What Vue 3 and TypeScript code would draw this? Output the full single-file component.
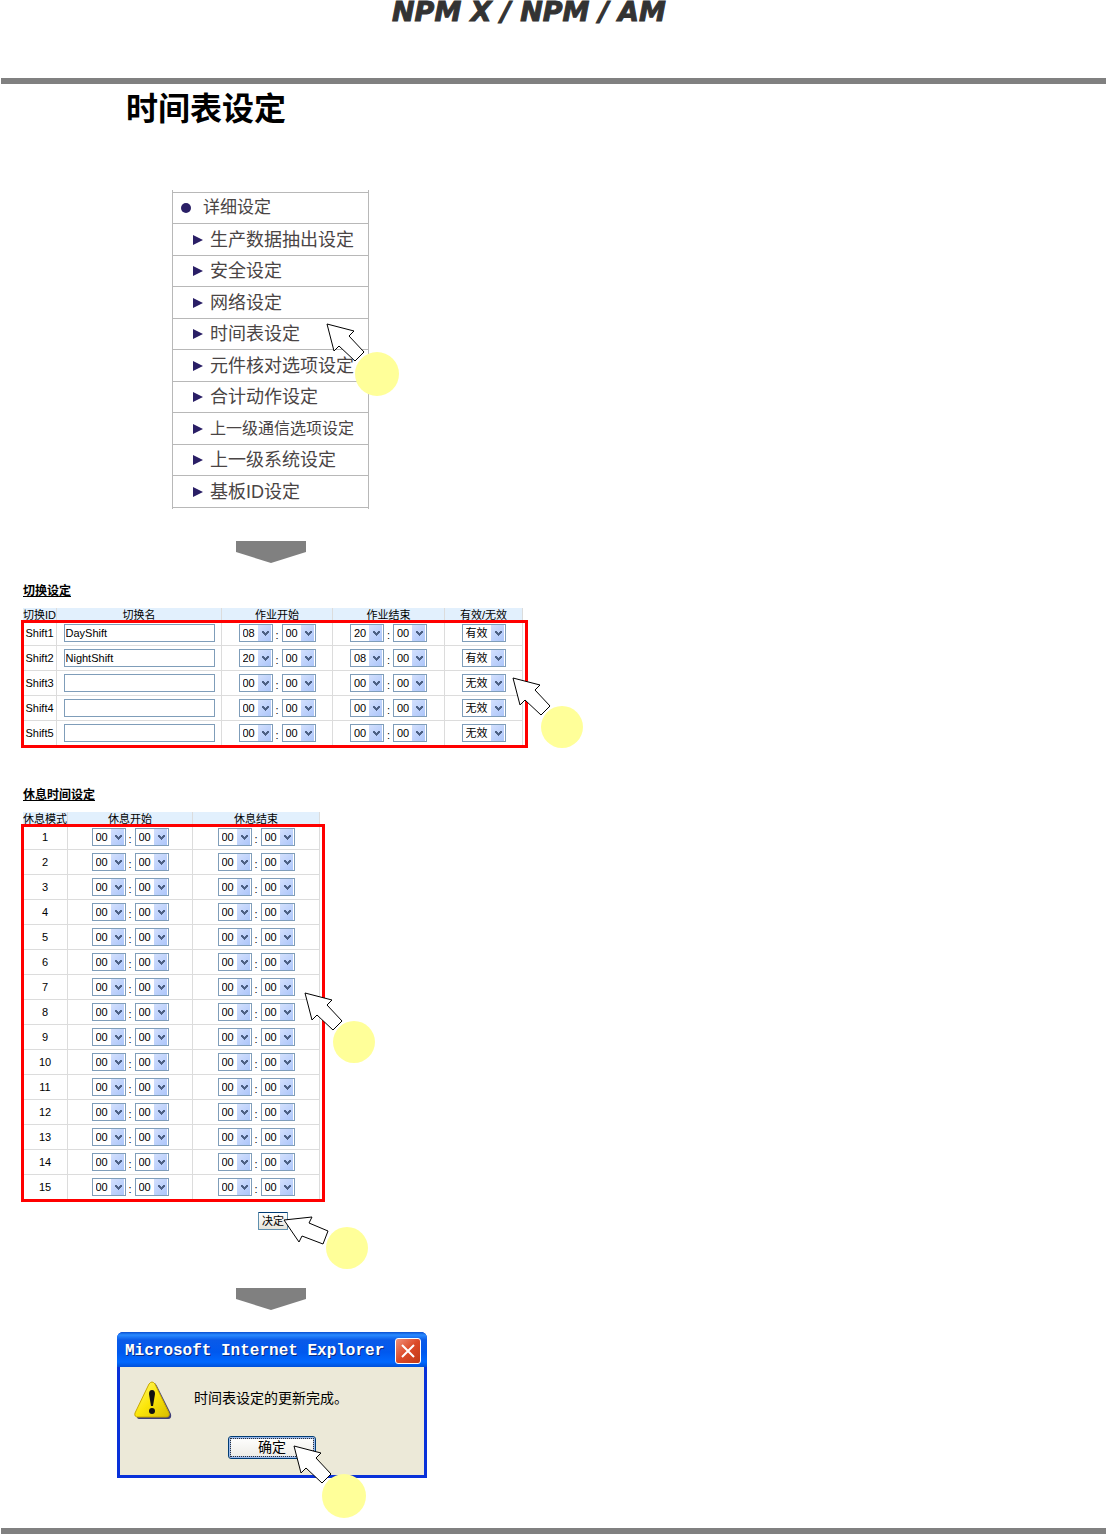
<script setup lang="ts">
import { reactive } from 'vue'

interface Shift {
  id: string
  name: string
  times: string[][]
  state: string
}

interface Rest {
  id: number
  times: string[][]
}

const menu: { label: string; size: string }[] = [
  { label: '生产数据抽出设定', size: '' },
  { label: '安全设定', size: '' },
  { label: '网络设定', size: '' },
  { label: '时间表设定', size: '' },
  { label: '元件核对选项设定', size: '' },
  { label: '合计动作设定', size: '' },
  { label: '上一级通信选项设定', size: 'compact' },
  { label: '上一级系统设定', size: '' },
  { label: '基板ID设定', size: '' },
]

const shifts = reactive<Shift[]>([
  { id: 'Shift1', name: 'DayShift', times: [['08', '00'], ['20', '00']], state: '有效' },
  { id: 'Shift2', name: 'NightShift', times: [['20', '00'], ['08', '00']], state: '有效' },
  { id: 'Shift3', name: '', times: [['00', '00'], ['00', '00']], state: '无效' },
  { id: 'Shift4', name: '', times: [['00', '00'], ['00', '00']], state: '无效' },
  { id: 'Shift5', name: '', times: [['00', '00'], ['00', '00']], state: '无效' },
])

const rests = reactive<Rest[]>(
  Array.from({ length: 15 }, (_, i) => ({ id: i + 1, times: [['00', '00'], ['00', '00']] })),
)

const hours = ['00', '08', '20']
const chevron = 'M0 0h2v1h1v1h1v-1h1v-1h2v2h-1v1h-1v1h-1v1h-1v-1h-1v-1h-1v-1h-1z'
const pointer = 'M1 1 28 8 23 13 38 29 29 38 13 23 8 28Z'
</script>

<template>
  <div class="page">
    <header class="top">
      <p class="brand">NPM X / NPM / AM</p>
    </header>

    <main>
      <h1>时间表设定</h1>

      <nav class="menu-wrap" aria-label="详细设定">
        <ul class="menu">
          <li class="head"><span class="dot"></span>详细设定</li>
          <li v-for="item in menu" :key="item.label" :class="item.size">
            <svg class="tri" viewBox="0 0 10 10" aria-hidden="true"><path d="M0 0 10 5 0 10Z" /></svg>
            <a href="#">{{ item.label }}</a>
          </li>
        </ul>
        <svg class="callout on-menu" viewBox="0 0 74 74" aria-hidden="true">
          <circle cx="51" cy="51" r="22" />
          <path :d="pointer" />
        </svg>
      </nav>

      <svg class="down" viewBox="0 0 70 22" aria-hidden="true"><path d="M0 0H70V11L35 22 0 11Z" /></svg>

      <section class="block shift-block">
        <h2>切换设定</h2>
        <div class="framed">
          <table class="shifts">
            <thead>
              <tr>
                <th>切换ID</th>
                <th>切换名</th>
                <th>作业开始</th>
                <th>作业结束</th>
                <th>有效/无效</th>
              </tr>
            </thead>
            <tbody>
              <tr v-for="s in shifts" :key="s.id">
                <td>{{ s.id }}</td>
                <td><input v-model="s.name" type="text" :aria-label="s.id + ' 切换名'" /></td>
                <td v-for="(t, i) in s.times" :key="i">
                  <div class="time">
                    <template v-for="(_, k) in t" :key="k">
                      <span v-if="k === 1" class="colon">:</span>
                      <span class="pick">
                        <select v-model="t[k]" :aria-label="s.id + (i ? ' 作业结束' : ' 作业开始')">
                          <option v-for="h in hours" :key="h">{{ h }}</option>
                        </select>
                        <svg viewBox="0 0 7 5" aria-hidden="true"><path :d="chevron" /></svg>
                      </span>
                    </template>
                  </div>
                </td>
                <td>
                  <div class="time">
                    <span class="pick wide">
                      <select v-model="s.state" :aria-label="s.id + ' 有效/无效'">
                        <option>有效</option>
                        <option>无效</option>
                      </select>
                      <svg viewBox="0 0 7 5" aria-hidden="true"><path :d="chevron" /></svg>
                    </span>
                  </div>
                </td>
              </tr>
            </tbody>
          </table>
          <svg class="callout on-shifts" viewBox="0 0 74 74" aria-hidden="true">
            <circle cx="50" cy="50" r="21" />
            <path :d="pointer" />
          </svg>
        </div>
      </section>

      <section class="block rest-block">
        <h2>休息时间设定</h2>
        <div class="framed">
          <table class="rests">
            <thead>
              <tr>
                <th>休息模式</th>
                <th>休息开始</th>
                <th>休息结束</th>
              </tr>
            </thead>
            <tbody>
              <tr v-for="r in rests" :key="r.id">
                <td>{{ r.id }}</td>
                <td v-for="(t, i) in r.times" :key="i">
                  <div class="time">
                    <template v-for="(_, k) in t" :key="k">
                      <span v-if="k === 1" class="colon">:</span>
                      <span class="pick">
                        <select v-model="t[k]" :aria-label="r.id + (i ? ' 休息结束' : ' 休息开始')">
                          <option v-for="h in hours" :key="h">{{ h }}</option>
                        </select>
                        <svg viewBox="0 0 7 5" aria-hidden="true"><path :d="chevron" /></svg>
                      </span>
                    </template>
                  </div>
                </td>
              </tr>
            </tbody>
          </table>
          <svg class="callout on-rests" viewBox="0 0 74 74" aria-hidden="true">
            <circle cx="50" cy="50" r="21" />
            <path :d="pointer" />
          </svg>
        </div>
      </section>

      <div class="submit">
        <button type="button" class="decide">决定</button>
        <svg class="callout on-submit" viewBox="0 0 88 56" aria-hidden="true">
          <circle cx="64" cy="34" r="21" />
          <path d="M1 6 29 3 26 9 45 17 40 30 19 22 16 28Z" />
        </svg>
      </div>

      <svg class="down" viewBox="0 0 70 22" aria-hidden="true"><path d="M0 0H70V11L35 22 0 11Z" /></svg>

      <div class="dialog" role="alertdialog" aria-labelledby="dialog-title">
        <div class="bar">
          <span id="dialog-title">Microsoft Internet Explorer</span>
          <button type="button" class="close" aria-label="关闭">
            <svg viewBox="0 0 14 14" aria-hidden="true"><path d="M1 1 13 13M13 1 1 13" /></svg>
          </button>
        </div>
        <div class="body">
          <div class="message">
            <svg class="warn" viewBox="0 0 38 38" aria-hidden="true">
              <defs>
                <linearGradient id="warn-fill" x1="0" y1="0" x2="1" y2="1">
                  <stop offset="0" stop-color="#fff97a" />
                  <stop offset="0.5" stop-color="#fbe60a" />
                  <stop offset="1" stop-color="#d9bd00" />
                </linearGradient>
              </defs>
              <path d="M19 2Q21 1 23 5L37 33Q38 38 34 38H6Q3 38 3 36Z" fill="#3d3d78" />
              <path d="M15 3Q18 -1 21 3L35 32Q36 36 32 36H4Q0 36 1 32Z" fill="url(#warn-fill)" stroke="#c9a800" />
              <path d="M15 13Q15 9 18 9T21 13L19 25H17Z" fill="#111" />
              <circle cx="18" cy="30" r="3" fill="#111" />
            </svg>
            <p>时间表设定的更新完成。</p>
          </div>
          <button type="button" class="ok"><span>确定</span></button>
        </div>
        <svg class="callout on-dialog" viewBox="0 0 74 74" aria-hidden="true">
          <circle cx="51" cy="51" r="22" />
          <path :d="pointer" />
        </svg>
      </div>
    </main>

    <footer class="rule"></footer>
  </div>
</template>

<style>
body {
  margin: 0;
  background: #fff;
}
</style>

<style scoped>
.page {
  font-family: 'Liberation Sans', 'Noto Sans CJK SC', sans-serif;
  color: #000;
}

.page * {
  box-sizing: border-box;
}

.top {
  height: 84px;
  margin-left: 1px;
  padding-left: 391px;
  border-bottom: 6px solid #808080;
}

.brand {
  margin: 0;
  font: italic 700 27px/24px 'DejaVu Sans', sans-serif;
  color: #333;
  -webkit-text-stroke: 1px #333;
  white-space: nowrap;
}

h1 {
  margin: 0 0 56px 126px;
  font-size: 32px;
  line-height: 50px;
  font-weight: 600;
}

.menu-wrap {
  position: relative;
  width: 197px;
  margin-left: 172px;
}

.menu {
  margin: 0;
  padding: 2px 0 1px;
  list-style: none;
  border: solid #b8b8b8;
  border-width: 0 1px;
}

.menu li {
  display: flex;
  align-items: center;
  gap: 7px;
  height: 31px;
  padding-left: 20px;
  border-bottom: 1px solid #b8b8b8;
  font-size: 18px;
  line-height: 24px;
  color: #4a4545;
  white-space: nowrap;
}

.menu li:nth-child(even) {
  height: 32px;
}

.menu li.head {
  height: 32px;
  gap: 12px;
  padding-left: 8px;
  border-top: 1px solid #b8b8b8;
  font-size: 17px;
}

.menu li.compact {
  font-size: 16px;
}

.menu a {
  color: inherit;
  text-decoration: none;
}

.dot {
  width: 10px;
  height: 10px;
  border-radius: 50%;
  background: #2a1f66;
}

.tri {
  width: 10px;
  height: 10px;
  fill: #2a1f66;
}

.down {
  display: block;
  width: 70px;
  height: 22px;
  margin-left: 236px;
  fill: #808080;
}

.menu-wrap + .down {
  margin-top: 32px;
}

.callout {
  position: absolute;
  width: 74px;
  height: 74px;
  pointer-events: none;
  z-index: 1;
}

.callout circle {
  fill: #ffff99;
}

.callout path {
  fill: #fff;
  stroke: #000;
  stroke-width: 1;
}

.on-menu {
  left: 154px;
  top: 133px;
}

.on-shifts {
  left: 489px;
  top: 69px;
}

.on-rests {
  left: 281px;
  top: 180px;
}

.on-submit {
  left: 25px;
  top: 2px;
  width: 88px;
  height: 56px;
}

.on-dialog {
  left: 173px;
  top: 113px;
}

.block {
  width: fit-content;
  margin-left: 23px;
}

.shift-block {
  margin-top: 20px;
}

.rest-block {
  margin-top: 41px;
}

h2 {
  width: fit-content;
  margin: 0 0 9px;
  font-size: 12px;
  line-height: 16px;
  font-weight: 700;
  text-decoration: underline;
}

.framed {
  position: relative;
}

.framed::after {
  content: '';
  position: absolute;
  inset: 12px -5px -2px -2px;
  border: 3px solid #f00;
  pointer-events: none;
}

table {
  table-layout: fixed;
  border-collapse: separate;
  border-spacing: 0;
  font-size: 11px;
  line-height: 12px;
  text-align: center;
}

.shifts {
  width: 500px;
}

.rests {
  width: 297px;
}

th,
td {
  padding: 0;
  border-right: 1px solid #dcdcdc;
  white-space: nowrap;
}

th {
  height: 13px;
  background: #e2f0fd;
  font-weight: 400;
}

td {
  height: 25px;
  border-bottom: 1px solid #dcdcdc;
}

.shifts th:nth-child(1) {
  width: 34px;
}

.shifts th:nth-child(2) {
  width: 165px;
}

.shifts th:nth-child(3) {
  width: 111px;
}

.shifts th:nth-child(4) {
  width: 112px;
}

.rests th:nth-child(1) {
  width: 45px;
}

.rests th:nth-child(2) {
  width: 125px;
}

input {
  display: block;
  width: 151px;
  height: 18px;
  margin: 0 auto;
  padding: 0 1px;
  border: 1px solid #7f9db9;
  border-radius: 0;
  background: #fff;
  font: inherit;
  color: #000;
}

.time {
  display: flex;
  justify-content: center;
  align-items: center;
}

.colon {
  width: 9px;
  padding-top: 4px;
}

.pick {
  display: grid;
  width: 34px;
  height: 18px;
}

.pick.wide {
  width: 44px;
}

.pick select,
.pick svg {
  grid-area: 1 / 1;
}

.pick select {
  width: 100%;
  height: 18px;
  margin: 0;
  padding: 0 0 0 3px;
  appearance: none;
  border: 1px solid #7f9db9;
  border-radius: 0;
  background: linear-gradient(135deg, #d3e0fd, #adc6fa) right 1px center / 13px 16px no-repeat #fff;
  font: inherit;
  color: #000;
}

.pick svg {
  justify-self: end;
  align-self: center;
  width: 7px;
  height: 5px;
  margin-right: 4px;
  fill: #4d6185;
  pointer-events: none;
}

.submit {
  position: relative;
  width: fit-content;
  margin: 12px 0 58px 258px;
}

.decide {
  display: block;
  width: 30px;
  height: 18px;
  padding: 0;
  border: 1px solid #5f8fae;
  border-top: 1px solid #003c74;
  border-radius: 1px;
  background: linear-gradient(#fff, #e6e4da);
  font: 11px/12px 'Liberation Sans', 'Noto Sans CJK SC', sans-serif;
  color: #000;
}

.dialog {
  position: relative;
  width: 310px;
  margin: 22px 0 50px 117px;
  border: solid #0831d9;
  border-width: 0 3px 3px;
  border-radius: 6px 6px 0 0;
  background: #0055e5;
}

.bar {
  display: flex;
  align-items: center;
  justify-content: space-between;
  height: 35px;
  margin: 0 -3px;
  padding: 2px 6px 0 8px;
  border-radius: 6px 6px 0 0;
  background: linear-gradient(#0a4fd0, #2a8bff 3px, #0a5ae8 8px, #0058ee 20px, #0068ff 30px, #0050d8);
  font: bold 16px/20px 'Liberation Mono', monospace;
  color: #fff;
  text-shadow: 1px 1px #0a2a80;
  white-space: nowrap;
}

.close {
  display: grid;
  place-items: center;
  width: 26px;
  height: 26px;
  padding: 0;
  border: 1px solid #fff;
  border-radius: 3px;
  background: linear-gradient(135deg, #f0907a, #dc4a28 50%, #c03a18);
}

.close svg {
  width: 14px;
  height: 14px;
  fill: none;
  stroke: #fff;
  stroke-width: 2;
}

.body {
  padding: 14px 14px 16px;
  background: #ece9d8;
}

.message {
  display: flex;
  gap: 22px;
}

.warn {
  width: 38px;
  height: 38px;
}

.message p {
  margin: 6px 0 0;
  font-size: 14px;
  line-height: 22px;
  white-space: nowrap;
}

.ok {
  display: block;
  width: 88px;
  height: 23px;
  margin: 17px auto 0;
  padding: 1px;
  border: 1px solid #003c74;
  border-radius: 3px;
  background: linear-gradient(#fff, #ecebe5);
  box-shadow: inset 0 0 0 2px #9dbbec;
  font: 14px/17px 'Liberation Sans', 'Noto Sans CJK SC', sans-serif;
  color: #000;
}

.ok span {
  display: block;
  border: 1px dotted #333;
}

.rule {
  height: 6px;
  margin-left: 1px;
  background: #808080;
}
</style>
